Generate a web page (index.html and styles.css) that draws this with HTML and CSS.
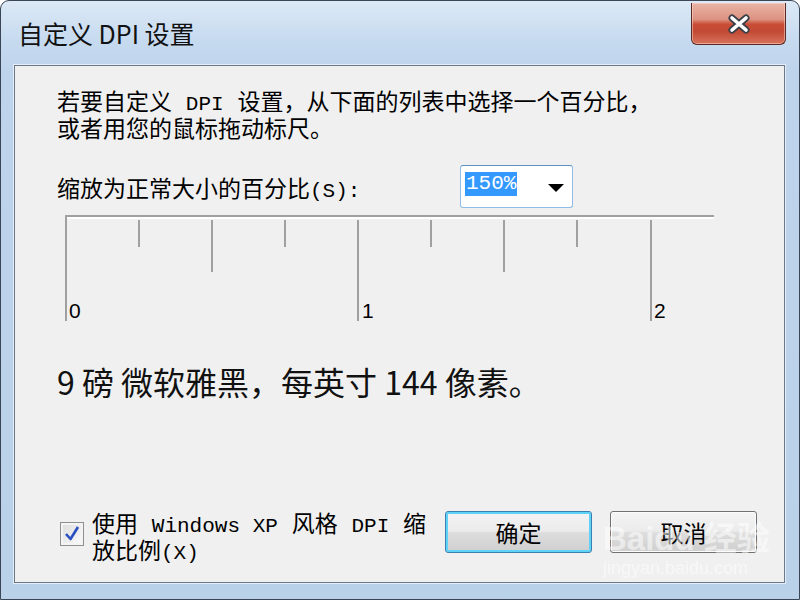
FILE: index.html
```html
<!DOCTYPE html>
<html lang="zh-CN">
<head>
    <meta charset="UTF-8">
    <title>自定义 DPI 设置</title>
    <link rel="stylesheet" href="styles.css">
</head>
<body>
    <div class="window">
        <div class="titlebar">
            <div class="title">自定义 DPI 设置</div>
            <button class="close" aria-label="关闭">
                <svg width="26" height="22" viewBox="0 0 26 22">
                    <path d="M6 5 L20 17 M20 5 L6 17" stroke="#3a3f48" stroke-width="7" stroke-linecap="round"/>
                    <path d="M6 5 L20 17 M20 5 L6 17" stroke="#fff" stroke-width="3.6" stroke-linecap="round"/>
                </svg>
            </button>
        </div>
        <div class="panel">
            <p class="intro">若要自定义 <span class="lat">DPI</span> 设置，从下面的列表中选择一个百分比，<br>或者用您的鼠标拖动标尺。</p>
            <div class="scale-row">
                <label class="scale-label">缩放为正常大小的百分比<span class="lat">(S):</span></label>
                <div class="combo">
                    <span class="combo-value">150%</span>
                    <span class="combo-arrow"></span>
                </div>
            </div>
            <!-- ruler: one unit = 292px, ticks every quarter -->
            <svg class="ruler" width="670" height="120" viewBox="0 0 670 120">
                <line x1="8" y1="8" x2="657" y2="8" stroke="#a0a0a0" stroke-width="2"/>
                <line x1="10" y1="10" x2="657" y2="10" stroke="#fff" stroke-width="2"/>
                <line x1="9" y1="8" x2="9" y2="113" stroke="#a0a0a0" stroke-width="2"/>
                <g stroke="#a0a0a0" stroke-width="2">
                    <line x1="82" y1="12" x2="82" y2="39"/>
                    <line x1="155" y1="12" x2="155" y2="64"/>
                    <line x1="228" y1="12" x2="228" y2="39"/>
                    <line x1="301" y1="12" x2="301" y2="113"/>
                    <line x1="374" y1="12" x2="374" y2="39"/>
                    <line x1="447" y1="12" x2="447" y2="64"/>
                    <line x1="520" y1="12" x2="520" y2="39"/>
                    <line x1="594" y1="12" x2="594" y2="113"/>
                </g>
                <g class="ruler-num">
                    <text x="12" y="110">0</text>
                    <text x="305" y="110">1</text>
                    <text x="597" y="110">2</text>
                </g>
            </svg>
            <p class="sample">9 磅 微软雅黑，每英寸 144 像素。</p>
            <div class="footer">
                <label class="xp-check">
                    <span class="checkbox">
                        <svg width="18" height="18" viewBox="0 0 18 18">
                            <path d="M3 9 L7.5 14 L15 2" fill="none" stroke="#2a4fc2" stroke-width="2.6" stroke-linejoin="round"/>
                        </svg>
                    </span>
                    <span>使用 <span class="lat">Windows XP</span> 风格 <span class="lat">DPI</span> 缩<br>放比例<span class="lat">(X)</span></span>
                </label>
                <div class="buttons">
                    <button class="btn btn-default">确定</button>
                    <button class="btn">取消</button>
                </div>
            </div>
            <div class="watermark">Bai<span>du</span> 经验<small>jingyan.baidu.com</small></div>
        </div>
    </div>
</body>
</html>
```

FILE: styles.css
```css
body {
    margin: 0;
    background: #fff;
    font-family: "Noto Sans CJK SC", sans-serif;
}
.window {
    width: 800px;
    height: 600px;
    box-sizing: border-box;
    border: 1px solid #3a4655;
    border-radius: 9px 9px 0 0;
    background: linear-gradient(to bottom, #dce9f6 0, #c6daef 40px, #bed4ec 70px, #bad1ea 100%);
    padding: 0 14px 16px 13px;
    display: flex;
    flex-direction: column;
}
.titlebar {
    height: 64px;
    display: flex;
    justify-content: space-between;
    align-items: flex-start;
    flex-shrink: 0;
}
.title {
    padding: 16px 0 0 4px;
    font-size: 25px;
    line-height: 32px;
    color: #111;
}
.close {
    width: 95px;
    height: 42px;
    margin-top: 2px;
    margin-right: -1px;
    border: 1px solid #5b2a22;
    border-top: none;
    border-radius: 0 0 6px 6px;
    background: linear-gradient(to bottom, #e9b4a6 0, #dc9280 40%, #c94c36 52%, #c24a34 70%, #d8735d 100%);
    box-shadow: inset 0 0 0 1px rgba(255, 220, 210, 0.5);
    display: flex;
    align-items: center;
    justify-content: center;
    padding: 0;
}
.panel {
    flex: 1;
    position: relative;
    background: #f0f0f0;
    border: 1px solid #6b7887;
    box-shadow: 0 0 0 1px #e4eef8;
    padding: 25px 20px 15px 42px;
    display: flex;
    flex-direction: column;
    font-family: "Liberation Mono", "Noto Sans CJK SC", monospace;
    font-size: 23px;
    color: #000;
}
.lat {
    font-size: 21px;
}
.intro {
    margin: 0;
    line-height: 26px;
}
.scale-row {
    margin-top: 20px;
    display: flex;
    align-items: center;
    height: 44px;
}
.scale-label {
    width: 403px;
    padding-top: 10px;
    line-height: 26px;
}
.combo {
    width: 113px;
    height: 43px;
    box-sizing: border-box;
    border: 1px solid #8fbbe6;
    border-top-color: #5d8fc2;
    border-radius: 3px;
    background: #fff;
    display: flex;
    align-items: center;
    justify-content: space-between;
    padding: 0 8px 0 4px;
}
.combo-value {
    background: #3399ff;
    color: #fff;
    font-size: 21px;
    line-height: 24px;
    padding: 0 1px;
    margin-top: -4px;
}
.combo-arrow {
    width: 0;
    height: 0;
    border-left: 8px solid transparent;
    border-right: 8px solid transparent;
    border-top: 8px solid #000;
    margin-top: 3px;
}
.ruler {
    display: block;
}
.ruler-num {
    font-family: "Liberation Sans", sans-serif;
    font-size: 21px;
    fill: #000;
}
.sample {
    margin: 31px 0 0;
    font-family: "Noto Sans CJK SC", sans-serif;
    font-size: 32px;
    line-height: 44px;
    color: #111;
}
.footer {
    margin-top: auto;
    display: flex;
    align-items: flex-start;
}
.xp-check {
    width: 388px;
    display: flex;
    align-items: flex-start;
    line-height: 26px;
}
.checkbox {
    width: 22px;
    height: 22px;
    margin: 9px 8px 0 3px;
    border: 1px solid #8e8f8f;
    background: linear-gradient(135deg, #dcdcdc, #fbfbfb);
    box-shadow: inset 0 0 0 2px #f4f4f4;
    display: flex;
    align-items: center;
    justify-content: center;
    flex-shrink: 0;
}
.buttons {
    display: flex;
    gap: 18px;
    margin-top: -2px;
}
.btn {
    width: 147px;
    height: 42px;
    border: 1px solid #707070;
    border-radius: 3px;
    background: linear-gradient(to bottom, #f4f4f4 0, #ebebeb 48%, #dddddd 52%, #cfcfcf 100%);
    box-shadow: inset 0 0 0 1px #fcfcfc;
    font-family: "Noto Sans CJK SC", sans-serif;
    font-size: 23px;
    color: #000;
    padding: 0;
}
.btn-default {
    border-color: #3c7fb1;
    box-shadow: inset 0 0 0 2px #5fd3f7;
}
.watermark {
    position: absolute;
    left: 588px;
    top: 455px;
    font-family: "Liberation Sans", "Noto Sans CJK SC", sans-serif;
    font-size: 33px;
    font-weight: bold;
    color: rgba(255, 255, 255, 0.55);
    line-height: 36px;
    pointer-events: none;
}
.watermark small {
    display: block;
    font-size: 18px;
    font-weight: normal;
    line-height: 22px;
}
```
